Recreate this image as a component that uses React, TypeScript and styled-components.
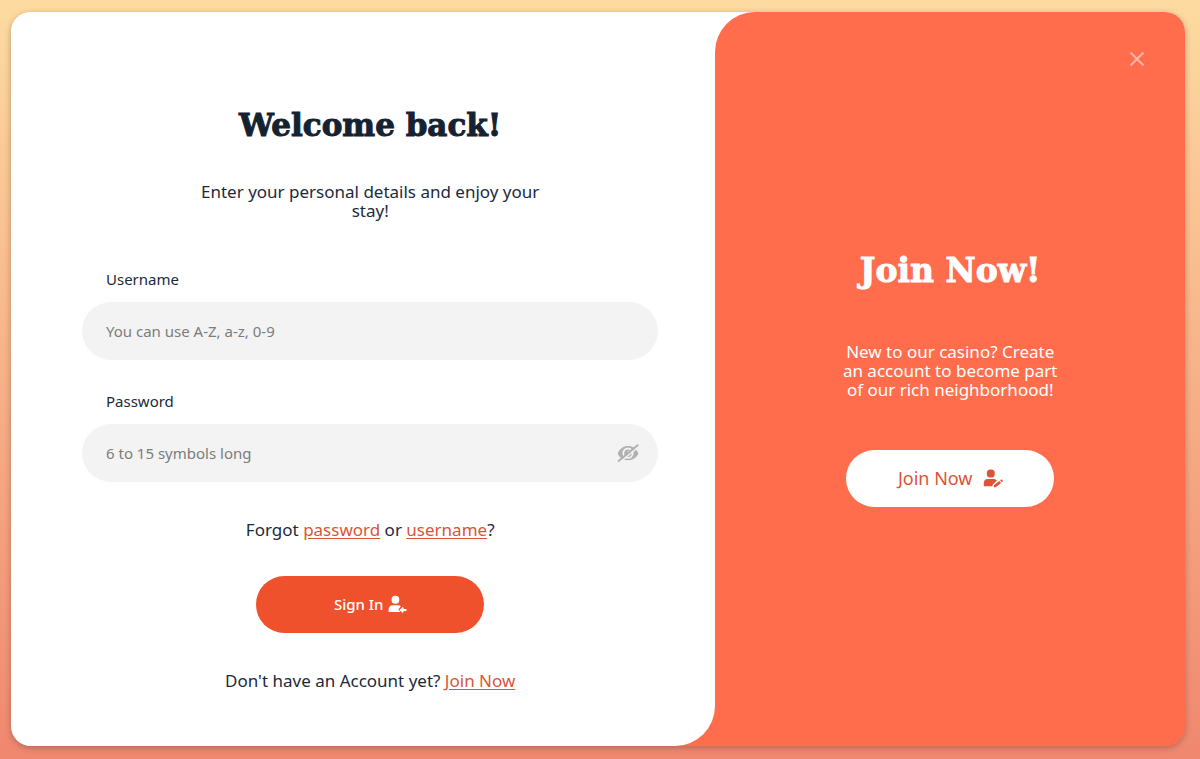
import React from "react";
import styled, { createGlobalStyle } from "styled-components";

const GlobalStyle = createGlobalStyle`
  *, *::before, *::after { box-sizing: border-box; }
  body {
    margin: 0;
    font-family: "Noto Sans", sans-serif;
    font-size: 17px;
    line-height: 19px;
    color: #1b2a3b;
  }
  h1, h2, p { margin: 0; }
`;

const Page = styled.main`
  min-height: 100vh;
  padding: 12px 15px 13px 11px;
  display: flex;
  background: linear-gradient(180deg, #fddba0 0%, #f0876f 100%);
`;

/* The two background halves show through the inner rounded corners of the panels. */
const Card = styled.div`
  flex: 1;
  display: grid;
  grid-template-columns: 3fr 2fr;
  overflow: hidden;
  border-radius: 20px;
  background: linear-gradient(180deg, #fff 50%, #ff6d4d 50%);
  box-shadow: 0 2px 6px rgba(90, 60, 50, 0.4);
`;

const SignInPanel = styled.section`
  padding: 93px 57px 54px 71px;
  background: #fff;
  border-radius: 0 0 40px 0;
  text-align: center;
`;

const JoinPanel = styled.section`
  position: relative;
  padding: 239px 24px 0;
  display: flex;
  flex-direction: column;
  align-items: center;
  background: #ff6d4d;
  border-radius: 40px 0 0 0;
  color: #fff;
  text-align: center;
`;

const Title = styled.h1`
  font: 700 31px/40px "DejaVu Serif", serif;
  color: #152232;
  -webkit-text-stroke: 1px currentColor;
`;

const JoinTitle = styled(Title).attrs({ as: "h2" })`
  font-size: 33px;
  color: #fff;
`;

const Intro = styled.p`
  max-width: 350px;
  margin: 37px auto 50px;
`;

const JoinText = styled.p`
  width: 224px;
  margin: 51px 0 51px;
`;

const Field = styled.div`
  margin-bottom: 32px;
  text-align: left;
`;

const Label = styled.label`
  display: block;
  padding: 0 24px;
  margin-bottom: 13px;
  font-size: 15px;
`;

const InputShell = styled.div`
  display: flex;
  align-items: center;
  height: 58px;
  padding: 0 19px 0 24px;
  border-radius: 29px;
  background: #f3f3f3;
`;

const Input = styled.input`
  flex: 1;
  min-width: 0;
  border: 0;
  outline: 0;
  padding: 0;
  background: transparent;
  font: 15px/19px "Noto Sans", sans-serif;
  color: #1b2a3b;
  &::placeholder { color: #7c7c7c; opacity: 1; }
`;

const IconButton = styled.button`
  display: flex;
  padding: 0;
  border: 0;
  background: none;
  color: #b0b0b0;
  cursor: pointer;
`;

const CloseButton = styled(IconButton)`
  position: absolute;
  top: 39px;
  right: 40px;
  color: #ffb6a6;
`;

const Link = styled.a`
  color: #dc5438;
  text-underline-offset: 2px;
`;

const Pill = styled.button<{ $light?: boolean }>`
  display: inline-flex;
  align-items: center;
  justify-content: center;
  gap: ${(p) => (p.$light ? 10 : 4)}px;
  width: ${(p) => (p.$light ? 208 : 228)}px;
  height: 57px;
  padding: 0;
  border: 0;
  border-radius: 29px;
  background: ${(p) => (p.$light ? "#fff" : "#f0512d")};
  color: ${(p) => (p.$light ? "#dc5438" : "#fff")};
  font: ${(p) => (p.$light ? "400 18px" : "500 15px")}/19px "Noto Sans", sans-serif;
  cursor: pointer;
`;

const Forgot = styled.p`
  margin: 38px 0 37px;
`;

const Signup = styled.p`
  margin-top: 38px;
`;

const UserArrowIcon = () => (
  <svg width="19" height="19" viewBox="0 0 19 19" fill="currentColor" aria-hidden="true">
    <rect x="3.600" y=".7" width="7.600" height="8" rx="3.500" />
    <path d="M.6 17v-2.300c0-2.600 1.800-4.500 4.200-4.500h5.200c1.200 0 2.100.4 2.800 1.100L10.400 14.400l2.200 2.600z" />
    <path d="M18.500 15h-5M15.300 12.600l-2.500 2.400 2.500 2.400" fill="none" stroke="currentColor" strokeWidth="1.800" />
  </svg>
);

const UserEditIcon = () => (
  <svg width="20" height="19" viewBox="0 0 20 19" fill="currentColor" aria-hidden="true">
    <rect x="3.800" y=".6" width="8" height="8" rx="3.700" />
    <path d="M.8 17.200v-3c0-2.600 1.700-4.200 4-4.200h5.600c1.500 0 2.800.6 3.600 1.600l-4.200 3.900-.5 1.700z" />
    <path d="M10.600 18.600l.5-2.600 5.200-4.100 1.800 2-5.100 4.200zM17.100 11.300l.7-.6c.5-.4 1-.4 1.300 0l.5.6c.4.4.3.9-.1 1.300l-.7.600z" />
  </svg>
);

const EyeOffIcon = () => (
  <svg width="22" height="20" viewBox="0 0 22 20" fill="none" stroke="currentColor" aria-hidden="true">
    <path d="M.6 10.500C2.600 5.600 6.500 3 11 3s8.400 2.600 10.400 7.500C19.400 15 15.500 17.200 11 17.200S2.600 15 .6 10.500z" fill="currentColor" stroke="none" />
    <circle cx="11" cy="10.200" r="4.700" stroke="#f3f3f3" strokeWidth="1.800" />
    <circle cx="11.800" cy="9" r="1.300" fill="#f3f3f3" stroke="none" />
    <path d="M2.500 19.500L22 3.500" stroke="#f3f3f3" strokeWidth="1.500" />
    <path d="M1 18.500L21.200 1.800" strokeWidth="1.900" />
  </svg>
);

const CloseIcon = () => (
  <svg width="16" height="16" viewBox="0 0 16 16" fill="none" stroke="currentColor" strokeWidth="2" aria-hidden="true">
    <path d="M1.500 1.500l13 13M14.500 1.500l-13 13" />
  </svg>
);

export default function App() {
  return (
    <>
      <GlobalStyle />
      <Page>
        <Card>
          <SignInPanel>
            <Title>Welcome back!</Title>
            <Intro>Enter your personal details and enjoy your stay!</Intro>
            <form onSubmit={(e) => e.preventDefault()}>
              <Field>
                <Label htmlFor="username">Username</Label>
                <InputShell>
                  <Input id="username" type="text" placeholder="You can use A-Z, a-z, 0-9" />
                </InputShell>
              </Field>
              <Field>
                <Label htmlFor="password">Password</Label>
                <InputShell>
                  <Input id="password" type="password" placeholder="6 to 15 symbols long" />
                  <IconButton type="button" aria-label="Show password">
                    <EyeOffIcon />
                  </IconButton>
                </InputShell>
              </Field>
              <Forgot>
                Forgot <Link href="#password">password</Link> or <Link href="#username">username</Link>?
              </Forgot>
              <Pill type="submit">
                Sign In <UserArrowIcon />
              </Pill>
              <Signup>
                Don't have an Account yet? <Link href="#join">Join Now</Link>
              </Signup>
            </form>
          </SignInPanel>
          <JoinPanel>
            <CloseButton type="button" aria-label="Close">
              <CloseIcon />
            </CloseButton>
            <JoinTitle>Join Now!</JoinTitle>
            <JoinText>New to our casino? Create an account to become part of our rich neighborhood!</JoinText>
            <Pill $light type="button">
              Join Now <UserEditIcon />
            </Pill>
          </JoinPanel>
        </Card>
      </Page>
    </>
  );
}
